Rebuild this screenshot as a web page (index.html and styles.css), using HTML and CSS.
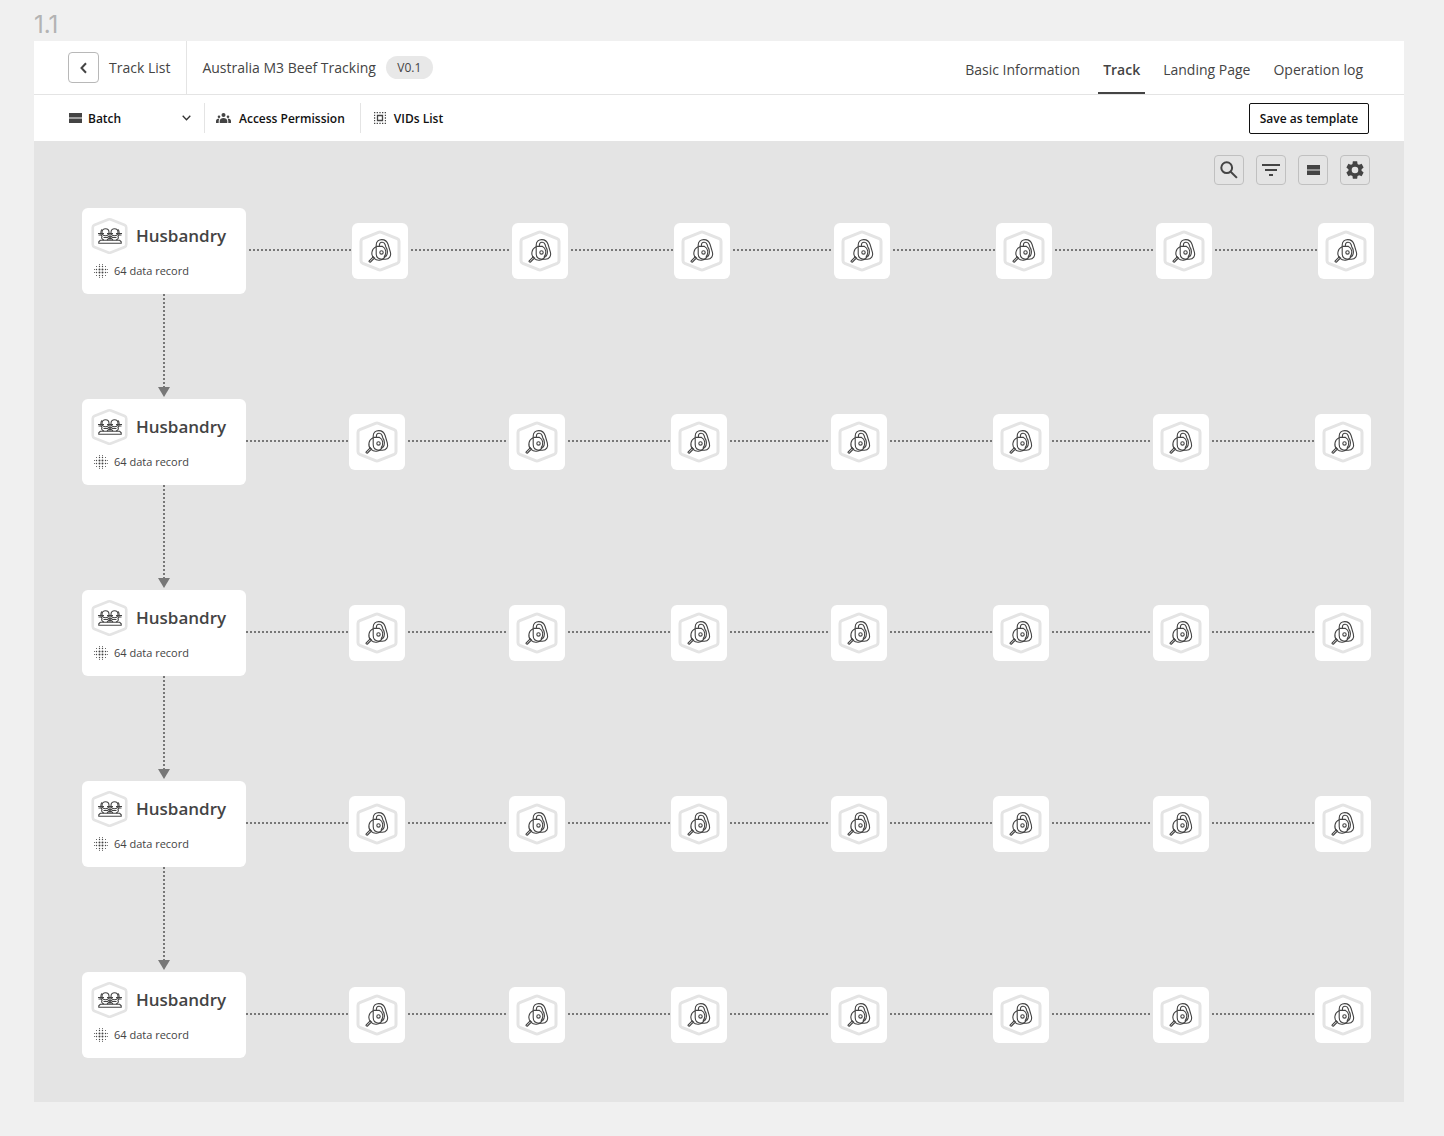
FILE: index.html
```html
<!DOCTYPE html>
<html lang="en">
<head>
<meta charset="utf-8">
<title>Australia M3 Beef Tracking</title>
<link rel="stylesheet" href="styles.css">
</head>
<body>
<svg class="defs" aria-hidden="true">
  <symbol id="bars" viewBox="0 0 13 10"><path d="M0 0h13v4.500H0zM0 5.500h13V10H0z" fill="currentColor"/></symbol>
  <symbol id="hex" viewBox="0 0 42 42"><path d="M19.500 2.300 3.800 8.600Q2 9.400 2 11.300v19.400q0 1.900 1.800 2.700l15.700 6.300q1.500.6 3 0l15.700-6.300q1.800-.8 1.800-2.700V11.300q0-1.900-1.800-2.700L22.500 2.300q-1.500-.6-3 0z" fill="none" stroke="#e4e4e4" stroke-width="3"/></symbol>
  <symbol id="lock" viewBox="0 0 24 24"><g fill="none" stroke="#444" stroke-width="1.100"><path d="M8.200 7.800A7 7 0 1 0 17.500 16.500"/><path d="M8.200 14.500V6C8.200 2.500 10.800.6 13.800.6c3.400 0 5.300 1.700 6.300 4.900l2.200 7.300c1.200 4.200-1 7.400-5 7.400h-3.100c-3.600 0-6-2.200-6-5.700z"/><path d="M11.400 7.300V6c0-3.400 4.800-3.600 5.700-.5l.7 2.300c2 2.700 2.500 7-.3 10.200"/><path d="M8.200 7.400h6.300c3.500 1.700 4.500 6.600 1.500 10.600"/><circle cx="13.500" cy="13.400" r="1.700"/><path d="m5.200 17.800-4 4c-.6.700.6 1.800 1.300 1.200l4-4z"/></g></symbol>
  <symbol id="herd" viewBox="0 0 24 16"><g fill="none" stroke="#444" stroke-width="1.100"><path d="M.8 15.300h22.400v-1.500l-1.500-1.500H2.300L.8 13.800z"/><circle cx="7.500" cy="4.200" r="3.500"/><circle cx="16.500" cy="4.200" r="3.500"/><path d="M4 1.500C2.500 2.500 2.500 7 4 8.500c-1 1.500 0 2.800 2 3.500M20 1.500c1.500 1 1.500 5.500 0 7 1 1.500 0 2.800-2 3.500M11 5l1 1.500L13 5M5.500 9.500h4L12 7.500l2.500 2h4M12 7.500V12M9 12l3-2.500 3 2.500"/><path d="M0 5.500h6M9 5.500h6M18 5.500h6M.5 7h3M23.500 7h-3"/></g></symbol>
  <symbol id="grain" viewBox="0 0 14 14"><g stroke="#444" stroke-linecap="round" fill="none"><path stroke-width="2" stroke-dasharray="0 3" d="M5.500 5.500h3.100M5.500 8.500h3.100"/><path stroke-width="1.400" stroke-dasharray="0 3" d="M5.500 2.500h3.100M5.500 11.500h3.100M2.500 5.500h.1M2.500 8.500h.1M11.500 5.500h.1M11.500 8.500h.1"/><path stroke-width="1" stroke-dasharray="0 3" d="M5.500.6h3.100M5.500 13.400h3.100M2.500 2.500h.1M2.500 11.500h.1M11.500 2.500h.1M11.500 11.500h.1M.6 5.500h.1M.6 8.500h.1M13.300 5.500h.1M13.300 8.500h.1"/></g></symbol>
</svg>
<p class="frame-label">1.1</p>
<div class="app">
  <header class="header">
    <div class="crumb">
      <button class="back" aria-label="Back"><svg width="8" height="12" viewBox="0 0 8 12"><path d="M6 1.200 1.500 6 6 10.800" fill="none" stroke="#444" stroke-width="2"/></svg></button>
      <span>Track List</span>
    </div>
    <h1 class="title">Australia M3 Beef Tracking</h1>
    <span class="version">V0.1</span>
    <nav class="tabs">
      <a href="#">Basic Information</a>
      <a href="#" class="active" aria-current="page">Track</a>
      <a href="#">Landing Page</a>
      <a href="#">Operation log</a>
    </nav>
  </header>
  <div class="toolbar">
    <button class="tool batch"><svg width="13" height="10"><use href="#bars"/></svg><span>Batch</span><svg class="chevron" width="9" height="6" viewBox="0 0 9 6"><path d="m.7.8 3.800 4 3.800-4" fill="none" stroke="#333" stroke-width="1.300"/></svg></button>
    <button class="tool access"><svg width="15" height="10" viewBox="0 0 15 10" fill="#444"><circle cx="7.500" cy="2" r="2"/><circle cx="3" cy="3.700" r="1.300"/><circle cx="12" cy="3.700" r="1.300"/><path d="M3.700 10V8c0-4 7.600-4 7.600 0v2zM0 10V8q0-2.500 3.400-2.500Q2.700 7 2.700 8v2zM15 10V8q0-2.500-3.400-2.500.7 1.500.7 2.500v2z"/></svg><span>Access Permission</span></button>
    <button class="tool vids"><svg width="12" height="12" viewBox="0 0 12 12" fill="none" stroke="#444"><path d="M3.500 3.500h5v5h-5z" stroke-width="1.300"/><path d="M0 .6h12M0 11.400h12M.6 0v12M11.400 0v12" stroke-width="1.200" stroke-dasharray="1.300 1.370"/></svg><span>VIDs List</span></button>
    <button class="save">Save as template</button>
  </div>
  <main class="canvas">
    <div class="actions">
      <button aria-label="Search"><svg width="18" height="18" viewBox="0 0 18 18" fill="none" stroke="#444" stroke-width="2"><circle cx="6.700" cy="6.700" r="5.400"/><path d="m10.700 10.700 6.200 6.200"/></svg></button>
      <button aria-label="Filter"><svg width="18" height="12" viewBox="0 0 18 12"><path d="M0 0h18v2H0zM3 5h12v2H3zM7 10h4v2H7z" fill="#444"/></svg></button>
      <button aria-label="Layout"><svg width="13" height="10"><use href="#bars"/></svg></button>
      <button aria-label="Settings"><svg width="22" height="22" viewBox="0 0 24 24"><path fill="#444" d="M19.140 12.940c.04-.3.060-.61.060-.94 0-.32-.02-.64-.07-.94l2.030-1.580c.18-.14.230-.41.120-.61l-1.920-3.320c-.12-.22-.37-.29-.59-.22l-2.390.96c-.5-.38-1.030-.7-1.620-.94l-.36-2.540c-.04-.24-.24-.41-.48-.41h-3.840c-.24 0-.43.170-.47.410l-.36 2.540c-.59.240-1.130.570-1.620.940l-2.390-.96c-.22-.08-.47 0-.59.220L2.740 8.870c-.12.210-.08.470.12.610l2.030 1.580c-.05.300-.09.630-.09.940s.02.640.07.940l-2.030 1.580c-.18.140-.23.410-.12.610l1.920 3.320c.12.220.37.290.59.220l2.390-.96c.5.380 1.030.700 1.620.940l.36 2.540c.05.240.24.410.48.410h3.840c.24 0 .44-.17.470-.41l.36-2.540c.59-.24 1.130-.56 1.620-.94l2.390.96c.22.080.47 0 .59-.22l1.920-3.320c.12-.22.070-.47-.12-.61zM12 15.600A3.600 3.600 0 1 1 12 8.400a3.600 3.600 0 0 1 0 7.200z"/></svg></button>
    </div>
    <div class="tracks" id="tracks"></div>
  </main>
</div>
<template id="stage">
  <article class="card">
    <div class="card-head"><span class="badge"><svg width="37" height="38" class="hex"><use href="#hex"/></svg><svg width="24" height="16" class="glyph"><use href="#herd"/></svg></span><h2>Husbandry</h2></div>
    <p><svg width="14" height="14"><use href="#grain"/></svg><span>64 data record</span></p>
  </article>
</template>
<template id="step">
  <span class="link"></span>
  <a href="#" class="node" aria-label="Step"><svg width="42" height="42" class="hex"><use href="#hex"/></svg><svg width="24" height="24" class="glyph"><use href="#lock"/></svg></a>
</template>
<script src="tracks.js"></script>
</body>
</html>
```
FILE: tracks.js
```js
const STAGES = 5;
const STEPS = 7;
const tracks = document.getElementById('tracks');
const stage = document.getElementById('stage');
const step = document.getElementById('step');

for (let i = 0; i < STAGES; i++) {
  const row = document.createElement('section');
  row.className = 'track';
  row.append(stage.content.cloneNode(true));
  for (let j = 0; j < STEPS; j++) row.append(step.content.cloneNode(true));
  tracks.append(row);
  if (i < STAGES - 1) {
    const arrow = document.createElement('div');
    arrow.className = 'arrow';
    tracks.append(arrow);
  }
}
```
FILE: styles.css
```css
* { box-sizing: border-box; }
body {
  margin: 0;
  padding: 8px 40px 34px 34px;
  background: #f0f0f0;
  color: #444;
  font-family: "Open Sans", sans-serif;
  font-size: 13px;
}
h1, h2, p { margin: 0; }
button { margin: 0; padding: 0; border: 0; background: none; font: inherit; color: inherit; cursor: pointer; }
a { color: inherit; text-decoration: none; }
svg { display: block; flex: none; }
.defs { position: absolute; width: 0; height: 0; }

.frame-label { height: 33px; line-height: 34px; font-family: Inter, sans-serif; font-size: 24px; color: #b3b3b3; }
.app { background: #fff; }

.header { display: flex; align-items: center; height: 54px; padding-right: 36px; border-bottom: 1px solid #e4e4e4; }
.crumb {
  display: flex;
  align-items: center;
  gap: 10px;
  align-self: stretch;
  padding: 0 16px 0 34px;
  border-right: 1px solid #e4e4e4;
  font-size: 14px;
  font-weight: 500;
}
.back { display: grid; place-items: center; width: 31px; height: 31px; border: 1px solid #b8b8b8; border-radius: 4px; }
.title { margin-left: 15px; font-size: 14px; font-weight: 500; }
.version { margin-left: 10px; width: 47px; border-radius: 12px; background: #e8e8e8; font-size: 12px; line-height: 23px; text-align: center; }
.tabs { display: flex; gap: 13px; align-self: stretch; margin-left: auto; font-size: 14px; }
.tabs a { padding: 0 5px; line-height: 58px; height: 53px; }
.tabs .active { font-weight: 600; border-bottom: 2px solid #444; }

.toolbar { display: flex; align-items: center; height: 46px; padding: 0 35px; color: #111; font-size: 12px; font-weight: 600; }
.tool { display: flex; align-items: center; height: 30px; }
.tool svg { color: #444; }
.batch { width: 136px; gap: 6px; padding-right: 13px; border-right: 1px solid #e4e4e4; }
.chevron { margin-left: auto; }
.access { gap: 8px; padding: 0 15px 0 11px; border-right: 1px solid #e4e4e4; }
.vids { gap: 8px; padding-left: 13px; }
.save { width: 120px; height: 31px; margin-left: auto; border: 1px solid #111; border-radius: 2px; }

.canvas { padding: 14px 33px 44px 48px; background: #e4e4e4; }
.actions { display: flex; justify-content: flex-end; gap: 12px; padding-right: 1px; }
.actions button { display: grid; place-items: center; width: 30px; height: 30px; border: 1px solid #c0c0c0; border-radius: 4px; color: #444; }

.tracks { padding-top: 23px; }
.track {
  display: grid;
  align-items: center;
  grid-template-columns: 164px 103fr 56px 104fr 56px 106fr 56px 104fr 56px 106fr 56px 104fr 56px 106fr 56px;
}
.track:first-child {
  margin-right: -3px;
  grid-template-columns: 164px 106fr 56px 104fr 56px 106fr 56px 104fr 56px 106fr 56px 104fr 56px 106fr 56px;
}
.card { height: 86px; padding: 9px; border-radius: 6px; background: #fff; }
.card-head { display: flex; align-items: center; gap: 8px; }
.badge, .node { display: grid; place-items: center; }
.badge { width: 37px; height: 38px; }
.hex, .glyph { grid-area: 1 / 1; }
.card h2 { font-size: 17px; line-height: 24px; font-weight: 600; }
.card p { display: flex; align-items: center; gap: 6px; margin-top: 7px; padding-left: 3px; font-size: 11px; line-height: 18px; }
.node { height: 56px; border-radius: 6px; background: #fff; }
.link {
  height: 2px;
  margin: 0 1px 2px 3px;
  background: repeating-linear-gradient(90deg, #777 0 2px, transparent 2px 4px);
}
.track:not(:first-child) .card + .link { margin-left: 0; }
.arrow { display: flex; flex-direction: column; align-items: center; width: 164px; height: 105px; padding-bottom: 2px; }
.arrow::before { content: ""; flex: 1; width: 2px; background: repeating-linear-gradient(#777 0 2px, transparent 2px 4px); }
.arrow::after { content: ""; border: solid transparent; border-width: 10px 6px 0; border-top-color: #777; }
```
